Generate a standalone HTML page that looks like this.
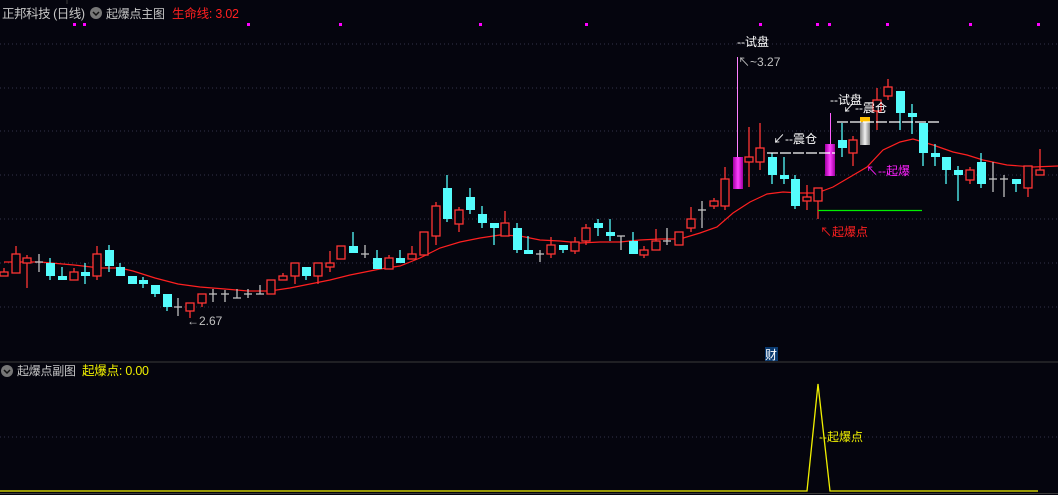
<!DOCTYPE html><html><head><meta charset="utf-8"><style>
body{margin:0;background:#05050e;width:1058px;height:495px;overflow:hidden}
svg{display:block}
text{font-family:"Liberation Sans","Noto Sans CJK SC",sans-serif}
.r line,.r rect{stroke:#ff3535;stroke-width:1.3;fill:#05050e}
.c line{stroke:#54fcfc;stroke-width:1.3}.c rect{fill:#54fcfc}
.x line{stroke:#c0c0c0;stroke-width:1.3}
.g{stroke:#34344a;stroke-width:1;stroke-dasharray:1 3}
</style></head><body>
<svg width="1058" height="495" xmlns="http://www.w3.org/2000/svg">
<defs>
<linearGradient id="mg" x1="0" x2="1"><stop offset="0" stop-color="#a000a0"/><stop offset=".5" stop-color="#ff40ff"/><stop offset="1" stop-color="#a000a0"/></linearGradient>
<linearGradient id="sg" x1="0" x2="1"><stop offset="0" stop-color="#808080"/><stop offset=".5" stop-color="#f0f0f0"/><stop offset="1" stop-color="#808080"/></linearGradient>
</defs>
<g class="g"><line x1="0" x2="1058" y1="44" y2="44"/><line x1="0" x2="1058" y1="88" y2="88"/><line x1="0" x2="1058" y1="131" y2="131"/><line x1="0" x2="1058" y1="175" y2="175"/><line x1="0" x2="1058" y1="219" y2="219"/><line x1="0" x2="1058" y1="263" y2="263"/><line x1="0" x2="1058" y1="307" y2="307"/><line x1="0" x2="1058" y1="437" y2="437"/></g>
<line x1="0" x2="1058" y1="362" y2="362" stroke="#3a3a3a"/>
<line x1="0" x2="1058" y1="493.5" y2="493.5" stroke="#3a3a3a"/>
<line x1="67" x2="67" y1="0" y2="4" stroke="#3a3a3a"/>
<text x="2" y="18" font-size="12.5" fill="#c8c8c8" textLength="83">正邦科技 (日线)</text>
<circle cx="96" cy="13" r="6" fill="#777"/><path d="M93 12l3 3 3-3" stroke="#111" stroke-width="1.5" fill="none"/>
<text x="106" y="18" font-size="12" fill="#c8c8c8" textLength="59">起爆点主图</text>
<text x="172" y="18" font-size="12.5" fill="#ff2020" textLength="67">生命线: 3.02</text>
<circle cx="7" cy="371" r="6" fill="#777"/><path d="M4 370l3 3 3-3" stroke="#111" stroke-width="1.5" fill="none"/>
<text x="17" y="375" font-size="12" fill="#c8c8c8" textLength="59">起爆点副图</text>
<text x="82" y="375" font-size="12.5" fill="#f0f000" textLength="67">起爆点: 0.00</text>
<g fill="#ff00ff"><rect x="73" y="23" width="3" height="3"/><rect x="83" y="23" width="3" height="3"/><rect x="247" y="23" width="3" height="3"/><rect x="339" y="23" width="3" height="3"/><rect x="479" y="23" width="3" height="3"/><rect x="585" y="23" width="3" height="3"/><rect x="759" y="23" width="3" height="3"/><rect x="816" y="23" width="3" height="3"/><rect x="828" y="23" width="3" height="3"/><rect x="886" y="23" width="3" height="3"/><rect x="969" y="23" width="3" height="3"/><rect x="1037" y="23" width="3" height="3"/></g>
<polyline fill="none" stroke="#ff2020" stroke-width="1.2" points="4,262 40,262 74,265 100,268 120,268 133,271 155,278 178,284 200,287 225,289 248,291 270,291 290,288 310,284 330,280 350,275 380,269 400,266 420,258 440,248 460,242 480,238 500,235 520,236 540,240 560,241 580,243 600,242 620,242 640,240 660,239 680,239 700,233 717,227 733,213 750,202 767,194 783,192 800,193 817,193 833,187 850,177 867,167 883,150 900,142 913,139 933,145 953,152 967,155 983,160 1007,165 1033,167 1058,166"/>
<g class="r">
<line x1="4" x2="4" y1="268" y2="276"/><rect x="0" y="272" width="8" height="4"/>
<line x1="16" x2="16" y1="246" y2="273"/><rect x="12" y="254" width="8" height="19"/>
<line x1="27" x2="27" y1="255" y2="288"/><rect x="23" y="258" width="8" height="5"/>
<line x1="74" x2="74" y1="268" y2="280"/><rect x="70" y="272" width="8" height="8"/>
<line x1="97" x2="97" y1="246" y2="280"/><rect x="93" y="254" width="8" height="22"/>
<line x1="190" x2="190" y1="303" y2="318"/><rect x="186" y="303" width="8" height="8"/>
<line x1="202" x2="202" y1="294" y2="307"/><rect x="198" y="294" width="8" height="9"/>
<rect x="267" y="280" width="8" height="14"/>
<line x1="283" x2="283" y1="273" y2="280"/><rect x="279" y="276" width="8" height="4"/>
<line x1="295" x2="295" y1="263" y2="284"/><rect x="291" y="263" width="8" height="13"/>
<line x1="318" x2="318" y1="263" y2="284"/><rect x="314" y="263" width="8" height="13"/>
<line x1="330" x2="330" y1="251" y2="272"/><rect x="326" y="263" width="8" height="4"/>
<rect x="337" y="246" width="8" height="13"/>
<line x1="389" x2="389" y1="255" y2="269"/><rect x="385" y="258" width="8" height="11"/>
<line x1="412" x2="412" y1="246" y2="259"/><rect x="408" y="254" width="8" height="5"/>
<rect x="420" y="232" width="8" height="23"/>
<line x1="436" x2="436" y1="202" y2="245"/><rect x="432" y="206" width="8" height="30"/>
<line x1="459" x2="459" y1="207" y2="232"/><rect x="455" y="210" width="8" height="14"/>
<line x1="505" x2="505" y1="211" y2="236"/><rect x="501" y="223" width="8" height="13"/>
<line x1="551" x2="551" y1="237" y2="258"/><rect x="547" y="245" width="8" height="9"/>
<line x1="575" x2="575" y1="237" y2="254"/><rect x="571" y="242" width="8" height="9"/>
<line x1="586" x2="586" y1="224" y2="245"/><rect x="582" y="228" width="8" height="13"/>
<line x1="644" x2="644" y1="246" y2="258"/><rect x="640" y="250" width="8" height="5"/>
<line x1="656" x2="656" y1="229" y2="250"/><rect x="652" y="241" width="8" height="9"/>
<rect x="675" y="232" width="8" height="13"/>
<line x1="691" x2="691" y1="207" y2="232"/><rect x="687" y="219" width="8" height="9"/>
<line x1="714" x2="714" y1="198" y2="209"/><rect x="710" y="201" width="8" height="5"/>
<line x1="725" x2="725" y1="167" y2="210"/><rect x="721" y="179" width="8" height="27"/>
<line x1="749" x2="749" y1="127" y2="187"/><rect x="745" y="157" width="8" height="5"/>
<line x1="760" x2="760" y1="123" y2="170"/><rect x="756" y="148" width="8" height="14"/>
<line x1="807" x2="807" y1="185" y2="210"/><rect x="803" y="197" width="8" height="4"/>
<line x1="818" x2="818" y1="188" y2="219"/><rect x="814" y="188" width="8" height="13"/>
<line x1="853" x2="853" y1="136" y2="166"/><rect x="849" y="140" width="8" height="13"/>
<line x1="877" x2="877" y1="88" y2="130"/><rect x="873" y="100" width="8" height="11"/>
<line x1="888" x2="888" y1="79" y2="100"/><rect x="884" y="87" width="8" height="9"/>
<line x1="970" x2="970" y1="167" y2="184"/><rect x="966" y="170" width="8" height="10"/>
<line x1="1028" x2="1028" y1="166" y2="197"/><rect x="1024" y="166" width="8" height="22"/>
<line x1="1040" x2="1040" y1="149" y2="175"/><rect x="1036" y="170" width="8" height="5"/>
</g>
<g class="c">
<line x1="50" x2="50" y1="258" y2="280"/><rect x="46" y="263" width="9" height="13"/>
<line x1="62" x2="62" y1="267" y2="280"/><rect x="58" y="276" width="9" height="4"/>
<line x1="85" x2="85" y1="263" y2="284"/><rect x="81" y="272" width="9" height="4"/>
<line x1="109" x2="109" y1="245" y2="272"/><rect x="105" y="250" width="9" height="16"/>
<line x1="120" x2="120" y1="263" y2="276"/><rect x="116" y="267" width="9" height="9"/>
<rect x="128" y="276" width="9" height="8"/>
<line x1="143" x2="143" y1="277" y2="288"/><rect x="139" y="280" width="9" height="4"/>
<line x1="155" x2="155" y1="285" y2="297"/><rect x="151" y="285" width="9" height="9"/>
<line x1="167" x2="167" y1="294" y2="311"/><rect x="163" y="294" width="9" height="13"/>
<line x1="306" x2="306" y1="267" y2="280"/><rect x="302" y="267" width="9" height="9"/>
<line x1="353" x2="353" y1="232" y2="253"/><rect x="349" y="246" width="9" height="7"/>
<line x1="377" x2="377" y1="250" y2="269"/><rect x="373" y="258" width="9" height="11"/>
<line x1="400" x2="400" y1="250" y2="263"/><rect x="396" y="258" width="9" height="5"/>
<line x1="447" x2="447" y1="175" y2="222"/><rect x="443" y="188" width="9" height="31"/>
<line x1="470" x2="470" y1="188" y2="214"/><rect x="466" y="197" width="9" height="13"/>
<line x1="482" x2="482" y1="206" y2="228"/><rect x="478" y="214" width="9" height="9"/>
<line x1="494" x2="494" y1="223" y2="245"/><rect x="490" y="223" width="9" height="5"/>
<line x1="517" x2="517" y1="223" y2="253"/><rect x="513" y="228" width="9" height="22"/>
<line x1="528" x2="528" y1="236" y2="254"/><rect x="524" y="250" width="9" height="4"/>
<line x1="563" x2="563" y1="245" y2="253"/><rect x="559" y="245" width="9" height="5"/>
<line x1="598" x2="598" y1="219" y2="236"/><rect x="594" y="223" width="9" height="5"/>
<line x1="610" x2="610" y1="219" y2="241"/><rect x="606" y="232" width="9" height="4"/>
<line x1="633" x2="633" y1="232" y2="254"/><rect x="629" y="241" width="9" height="13"/>
<line x1="772" x2="772" y1="153" y2="184"/><rect x="768" y="157" width="9" height="18"/>
<line x1="784" x2="784" y1="157" y2="184"/><rect x="780" y="175" width="9" height="4"/>
<line x1="795" x2="795" y1="175" y2="209"/><rect x="791" y="179" width="9" height="27"/>
<line x1="842" x2="842" y1="123" y2="157"/><rect x="838" y="140" width="9" height="8"/>
<line x1="900" x2="900" y1="91" y2="130"/><rect x="896" y="91" width="9" height="22"/>
<line x1="912" x2="912" y1="104" y2="134"/><rect x="908" y="113" width="9" height="4"/>
<line x1="923" x2="923" y1="123" y2="166"/><rect x="919" y="123" width="9" height="30"/>
<line x1="935" x2="935" y1="144" y2="166"/><rect x="931" y="153" width="9" height="4"/>
<line x1="946" x2="946" y1="157" y2="184"/><rect x="942" y="157" width="9" height="13"/>
<line x1="958" x2="958" y1="166" y2="201"/><rect x="954" y="170" width="9" height="5"/>
<line x1="981" x2="981" y1="153" y2="188"/><rect x="977" y="162" width="9" height="22"/>
<line x1="1016" x2="1016" y1="179" y2="192"/><rect x="1012" y="179" width="9" height="5"/>
</g>
<g class="x">
<line x1="39" x2="39" y1="254" y2="272"/><line x1="35" x2="43" y1="262" y2="262"/>
<line x1="178" x2="178" y1="298" y2="316"/><line x1="174" x2="182" y1="307" y2="307"/>
<line x1="213" x2="213" y1="289" y2="302"/><line x1="209" x2="217" y1="294" y2="294"/>
<line x1="225" x2="225" y1="290" y2="302"/><line x1="221" x2="229" y1="294" y2="294"/>
<line x1="237" x2="237" y1="289" y2="298"/><line x1="233" x2="241" y1="298" y2="298"/>
<line x1="248" x2="248" y1="289" y2="298"/><line x1="244" x2="252" y1="294" y2="294"/>
<line x1="260" x2="260" y1="285" y2="294"/><line x1="256" x2="264" y1="294" y2="294"/>
<line x1="365" x2="365" y1="245" y2="258"/><line x1="361" x2="369" y1="254" y2="254"/>
<line x1="540" x2="540" y1="250" y2="262"/><line x1="536" x2="544" y1="254" y2="254"/>
<line x1="621" x2="621" y1="236" y2="250"/><line x1="617" x2="625" y1="236" y2="236"/>
<line x1="667" x2="667" y1="228" y2="245"/><line x1="663" x2="671" y1="241" y2="241"/>
<line x1="702" x2="702" y1="201" y2="228"/><line x1="698" x2="706" y1="210" y2="210"/>
<line x1="993" x2="993" y1="162" y2="192"/><line x1="989" x2="997" y1="179" y2="179"/>
<line x1="1004" x2="1004" y1="175" y2="197"/><line x1="1000" x2="1008" y1="179" y2="179"/>
</g>
<line x1="737.5" x2="737.5" y1="57" y2="157" stroke="#ff80ff" stroke-width="1"/>
<rect x="733" y="157" width="10" height="32" fill="url(#mg)"/>
<line x1="830.5" x2="830.5" y1="113" y2="144" stroke="#ff60ff" stroke-width="1"/>
<rect x="825" y="144" width="10" height="32" fill="url(#mg)"/>
<line x1="865" x2="865" y1="117" y2="145" stroke="#ccc"/>
<rect x="860" y="117" width="10" height="28" fill="url(#sg)"/>
<rect x="860" y="117" width="10" height="5" fill="#ffc000"/>
<line x1="767" x2="835" y1="153" y2="153" stroke="#fff" stroke-width="1.2" stroke-dasharray="11 2"/>
<line x1="837" x2="940" y1="122" y2="122" stroke="#fff" stroke-width="1.2" stroke-dasharray="11 2"/>
<line x1="818" x2="922" y1="210.5" y2="210.5" stroke="#00ee00" stroke-width="1.2"/>
<g font-size="12">
<text x="737" y="46" fill="#fff">--试盘</text>
<text x="738" y="66" fill="#c0c0c0">↖~3.27</text>
<text x="187" y="325" fill="#c0c0c0">←2.67</text>
<text x="773" y="143" fill="#fff">↙--震仓</text>
<text x="830" y="104" fill="#fff">--试盘</text>
<text x="843" y="112" fill="#fff">↙--震仓</text>
<text x="866" y="175" fill="#ff20ff">↖--起爆</text>
<text x="820" y="236" fill="#ff2020">↖起爆点</text>
<text x="819" y="441" fill="#f0f000">--起爆点</text>
</g>
<rect x="765" y="347" width="13" height="14" fill="#0a3a70"/>
<text x="765" y="359" font-size="12" fill="#fff">财</text>
<polyline fill="none" stroke="#f0f000" stroke-width="1.3" points="0,491 807,491 818,384 830,491 1038,491"/>
</svg>
</body></html>
